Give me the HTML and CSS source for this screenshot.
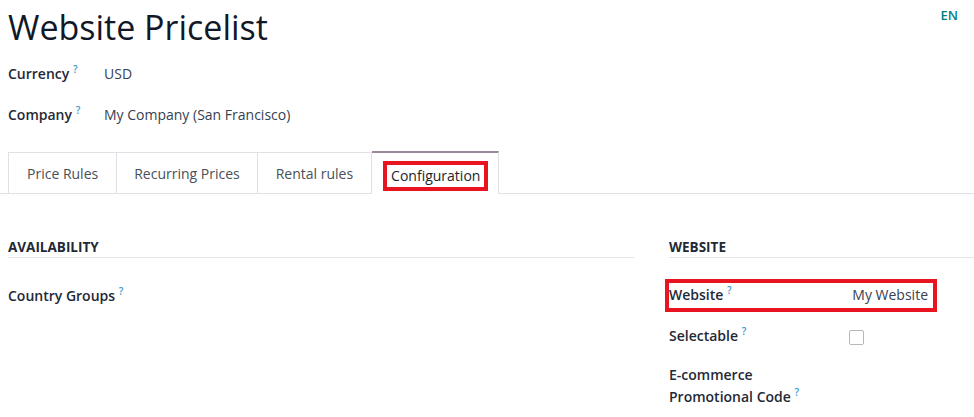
FILE: index.html
```html
<!DOCTYPE html>
<html lang="en">
<head>
  <meta charset="UTF-8" />
  <title>Website Pricelist</title>
  <link rel="stylesheet" href="styles.css">
</head>
<body>
  <div class="title-row">
    <h1>Website Pricelist</h1>
    <span class="lang">EN</span>
  </div>

  <div class="fields">
    <div class="label">Currency <sup>?</sup></div>
    <div class="value">USD</div>
    <div class="label">Company <sup>?</sup></div>
    <div class="value">My Company (San Francisco)</div>
  </div>

  <ul class="tabs">
    <li>Price Rules</li>
    <li>Recurring Prices</li>
    <li>Rental rules</li>
    <li class="active"><span class="mark">Configuration</span></li>
  </ul>

  <div class="groups">
    <div class="group">
      <h2>AVAILABILITY</h2>
      <div class="row">
        <div class="label">Country Groups <sup>?</sup></div>
      </div>
    </div>
    <div class="group">
      <h2>WEBSITE</h2>
      <div class="row marked">
        <div class="label">Website <sup>?</sup></div>
        <div class="value">My Website</div>
      </div>
      <div class="row">
        <div class="label">Selectable <sup>?</sup></div>
        <div class="value"><span class="checkbox"></span></div>
      </div>
      <div class="row">
        <div class="label">E-commerce<br>Promotional Code <sup>?</sup></div>
      </div>
    </div>
  </div>
</body>
</html>
```

FILE: styles.css
```css
body {
  font-family: "Open Sans", "Noto Sans", sans-serif;
  font-size: 14px;
  color: #212529;
  margin: 0;
  padding: 0 0 0 8px;
  overflow: hidden;
}
.title-row {
  display: flex;
  justify-content: space-between;
  align-items: flex-start;
  padding-right: 16px;
}
h1 {
  font-weight: 400;
  font-size: 34px;
  margin: 4px 0 0 0;
  line-height: 46px;
  color: #111827;
}
.lang {
  color: #017e84;
  font-weight: 600;
  font-size: 13px;
  margin-top: 6px;
}
sup {
  color: #3a9bc8;
  font-size: 10px;
  font-weight: 600;
  line-height: 0;
  vertical-align: 6px;
}
.fields {
  display: grid;
  grid-template-columns: 96px 1fr;
  row-gap: 19px;
  margin-top: 13px;
  line-height: 22px;
}
.label {
  font-weight: 600;
  color: #1f2937;
}
.value {
  color: #374151;
}
.tabs {
  list-style: none;
  display: flex;
  height: 41px;
  margin: 26px 0 0 -8px;
  padding: 0 0 0 8px;
  border-bottom: 1px solid #dee2e6;
}
.tabs li {
  box-sizing: border-box;
  height: 42px;
  display: flex;
  align-items: center;
  padding: 0 17.5px;
  border: 1px solid #dee2e6;
  border-bottom: none;
  border-left: none;
  color: #495057;
}
.tabs li:first-child {
  border-left: 1px solid #dee2e6;
  padding-left: 18px;
}
.tabs li.active {
  background: #fff;
  height: 43px;
  margin-top: -1px;
  border-top: 2px solid #9b8898;
  padding: 5px 10px 0 11px;
  color: #212529;
}
.mark {
  border: 4px solid #e8141f;
  padding: 0 4px 0 4.5px;
  line-height: 22px;
}
.groups {
  display: grid;
  grid-template-columns: 626px 1fr;
  column-gap: 35px;
  margin-top: 43px;
}
h2 {
  font-size: 13.5px;
  font-weight: 700;
  margin: 0;
  line-height: 20px;
  border-bottom: 1px solid #e4e4e4;
  color: #1f2937;
}
.row {
  display: grid;
  grid-template-columns: 180px 1fr;
  line-height: 22px;
  margin-top: 27px;
}
.row + .row {
  margin-top: 17px;
}
.row.marked + .row {
  margin-top: 13px;
}
.row.marked {
  margin: 21px 37px 0 -4px;
  padding: 1px 5px 2px 0;
  border: 4px solid #e8141f;
}
.row.marked .value {
  margin-left: -4px;
  text-align: right;
}
.checkbox {
  display: inline-block;
  width: 13px;
  height: 13px;
  border: 1px solid #b8b8b8;
  border-radius: 2px;
  vertical-align: middle;
}
```
